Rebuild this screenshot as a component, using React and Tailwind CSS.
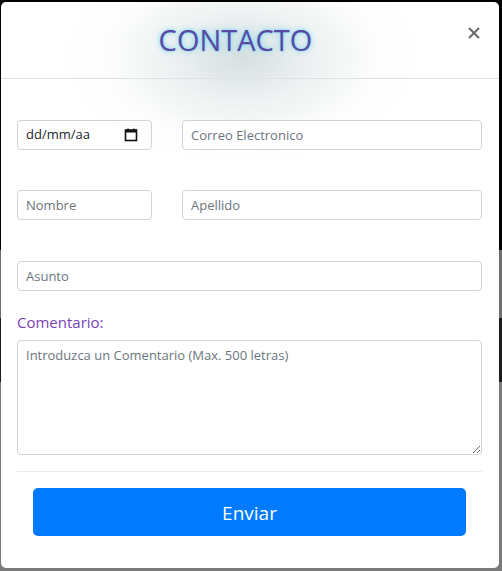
import React from "react";

const fieldCls =
  "h-[30px] rounded-[4px] border border-[#ced4da] bg-white px-2 text-[13px] text-[#495057] placeholder:text-[#6c757d] outline-none";

function CalendarIcon() {
  return (
    <svg width="14" height="14" viewBox="0 0 14 14" fill="none">
      <rect x="1.5" y="2" width="11" height="10.5" stroke="#111" strokeWidth="1.6" />
      <rect x="1.5" y="2" width="11" height="2.5" fill="#111" />
      <line x1="4" y1="0.5" x2="4" y2="2.5" stroke="#111" strokeWidth="1.4" />
      <line x1="10" y1="0.5" x2="10" y2="2.5" stroke="#111" strokeWidth="1.4" />
    </svg>
  );
}

export default function App() {
  return (
    <div
      className="relative h-[571px] w-[502px] overflow-hidden"
      style={{ fontFamily: '"Open Sans", "Noto Sans", sans-serif' }}
    >
      {/* page behind the backdrop */}
      <div className="flex h-full flex-col">
        <div className="h-[250px] bg-black" />
        <div className="h-[68px] bg-[#6f6f6f]" />
        <div className="h-[64px] bg-[#1c1c1c]" />
        <div className="flex-1 bg-[#7a7a7a]" />
      </div>

      {/* modal */}
      <div className="absolute left-[1px] top-[2px] h-[566px] w-[498px] overflow-hidden rounded-[5px] bg-white">
        {/* grey glow behind the title */}
        <div className="pointer-events-none absolute left-[50px] top-[-60px] h-[230px] w-[380px] bg-[radial-gradient(ellipse_at_center,rgba(175,192,192,0.5)_0%,rgba(205,215,215,0.3)_30%,rgba(235,238,238,0.15)_50%,rgba(255,255,255,0)_68%)]" />

        <div className="relative">
          {/* Header */}
          <div className="flex h-[77px] items-start border-b border-[#dee2e6] pl-4 pr-[13px]">
            <h1 className="mt-[21px] flex-1 text-center text-[29px] leading-[34px] text-[#5a4aa4] [text-shadow:0_0_2px_#6fd6f7,0_0_6px_#6fd6f7]">
              CONTACTO
            </h1>
            <button className="ml-2 mt-[19px] flex h-6 w-6 items-center justify-center">
              <svg width="12" height="12" viewBox="0 0 12 12">
                <path d="M1 1L11 11M11 1L1 11" stroke="#6a6a6a" strokeWidth="2" />
              </svg>
            </button>
          </div>

          {/* Body */}
          <div className="px-4 pr-[17px] pt-[41px]">
            <div className="flex gap-[30px]">
              <div className="flex h-[30px] w-[135px] shrink-0 items-center justify-between rounded-[4px] border border-[#ced4da] pl-2 pr-[13px] text-[13px] text-[#212529]">
                <span>dd/mm/aa</span>
                <CalendarIcon />
              </div>
              <input className={fieldCls + " min-w-0 flex-1"} placeholder="Correo Electronico" />
            </div>

            <div className="mt-[40px] flex gap-[30px]">
              <input className={fieldCls + " w-[135px] shrink-0"} placeholder="Nombre" />
              <input className={fieldCls + " min-w-0 flex-1"} placeholder="Apellido" />
            </div>

            <div className="mt-[41px]">
              <input className={fieldCls + " block w-full"} placeholder="Asunto" />
            </div>

            <label className="mt-[21px] block text-[15px] leading-[20px] text-[#7b3fb5]">
              Comentario:
            </label>

            <textarea
              className="mt-[8px] block h-[115px] w-full rounded-[4px] border border-[#ced4da] px-2 py-[5px] text-[13px] text-[#495057] placeholder:text-[#6c757d] outline-none"
              placeholder="Introduzca un Comentario (Max. 500 letras)"
            />

            <div className="mt-[16px] border-t border-[#e9ecef]" />

            <div className="px-4 pt-[16px]">
              <button className="h-[48px] w-full rounded-[5px] bg-[#007bff] pt-[3px] text-[19px] text-white">
                Enviar
              </button>
            </div>
          </div>
        </div>
      </div>
    </div>
  );
}
